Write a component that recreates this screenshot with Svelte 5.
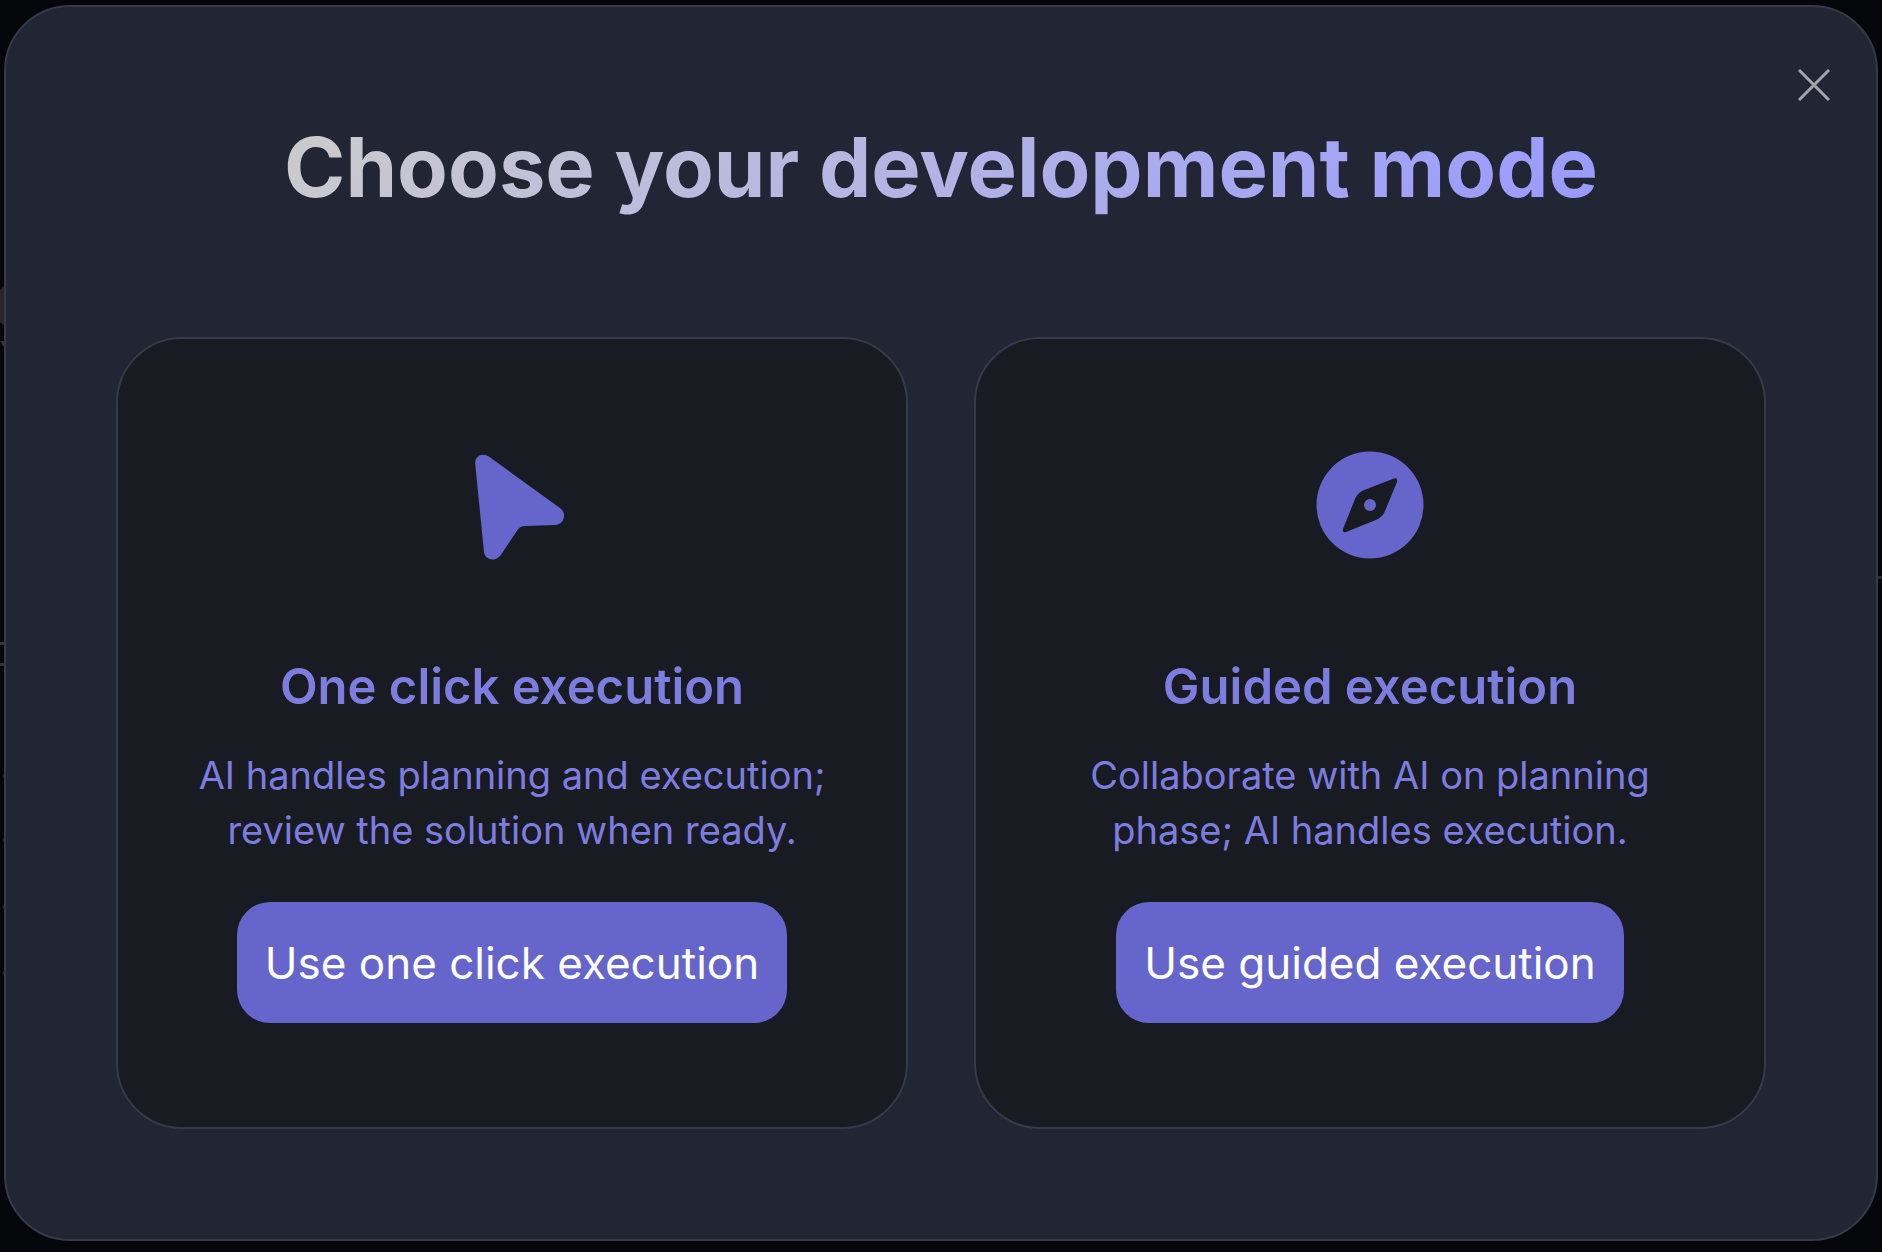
<script>
  const modes = [
    { icon: 'cursor', title: 'One click execution', text: 'AI handles planning and execution; review the solution when ready.', action: 'Use one click execution' },
    { icon: 'compass', title: 'Guided execution', text: 'Collaborate with AI on planning phase; AI handles execution.', action: 'Use guided execution' }
  ];
</script>

<main class="backdrop">
  <!-- dimmed page content peeking out behind the dialog -->
  <svg class="behind left" width="5" height="1000" viewBox="0 0 5 1000" aria-hidden="true">
    <circle cx="18" cy="306" r="24" fill="#272727" />
    <path d="M0 341H5V349Z" fill="#303238" />
    <path d="M0 643.500H5M0 664.500H5" stroke="#303238" stroke-width="3" />
    <path d="M3 776H5M3 840H5M3 907H5M3 973H5" stroke="#202228" stroke-width="3" />
  </svg>
  <svg class="behind right" width="4" height="600" viewBox="0 0 4 600" aria-hidden="true">
    <path d="M0 577.500H4" stroke="#2b2b2d" stroke-width="3" />
  </svg>
  <div class="dialog" role="dialog" aria-modal="true" aria-labelledby="dialog-title">
    <header>
      <button class="close" aria-label="Close">
        <svg viewBox="0 0 32 32" aria-hidden="true"><path d="M1 1 31 31M31 1 1 31" /></svg>
      </button>
    </header>
    <h1 id="dialog-title">Choose your development mode</h1>
    <div class="cards">
      {#each modes as mode}
        <section class="card">
          <svg class="icon" viewBox="0 0 128 128" aria-hidden="true">
            {#if mode.icon === 'cursor'}
              <path d="M27.200 23C26.500 15 34.500 11 41.500 16L112 67C119.500 72.500 116 83.500 107 84L77.500 85Q72 85 69.500 89L53.500 113C48 122 37 119 36 111Z" />
            {:else}
              <path fill-rule="evenodd" d="M64 10.500a53.500 53.500 0 1 0 0 107a53.500 53.500 0 1 0 0-107ZM88 37.500Q92 36.500 91 41L79 70Q76.500 76 71 78.500L40 91Q36 92 37 88L49 58Q51.500 52 57 49.500Z" />
              <circle cx="64" cy="64" r="6" />
            {/if}
          </svg>
          <h2>{mode.title}</h2>
          <p>{mode.text}</p>
          <button class="action">{mode.action}</button>
        </section>
      {/each}
    </div>
  </div>
</main>

<style>
  :global(body) { margin: 0; background: #050609; }
  * { box-sizing: border-box; }
  .backdrop { position: relative; min-height: 100vh; padding: 5px 4px 11px; display: flex; font-family: Inter, sans-serif; }
  .behind { position: absolute; top: 0; }
  .left { left: 0; }
  .right { right: 0; }
  .dialog { position: relative; flex: 1; padding: 60px 110px 110px; border: 2px solid #363947; border-radius: 66px; background: #222533; }
  header { display: flex; justify-content: flex-end; margin-right: -66px; }
  .close { width: 36px; height: 36px; padding: 2px; border: 0; background: none; cursor: pointer; }
  .close svg { display: block; width: 32px; height: 32px; fill: none; stroke: #a3a5ad; stroke-width: 3; stroke-linecap: butt; }
  h1 { width: fit-content; margin: 14px auto 120px; font-size: 83px; line-height: 100px; font-weight: 700; color: transparent; background: linear-gradient(135deg, #ccc, #99f); background-clip: text; }
  .cards { display: grid; grid-template-columns: 1fr 1fr; gap: 66px; }
  .card { display: flex; flex-direction: column; align-items: center; padding: 102px 64px 104px; border: 2px solid #363947; border-radius: 66px; background: #191b22; text-align: center; }
  .icon { width: 128px; height: 128px; fill: #6565cb; }
  h2 { margin: 86px 0 29px; font-size: 49px; line-height: 64px; font-weight: 600; color: #7d7de0; }
  p { margin: 0 0 44px; font-size: 38px; line-height: 55px; color: #7d7de0; }
  .action { padding: 29px 28px 27px; border: 0; border-radius: 33px; background: #6565cb; color: #fff; font: 400 44px/65px Inter, sans-serif; cursor: pointer; }
</style>
